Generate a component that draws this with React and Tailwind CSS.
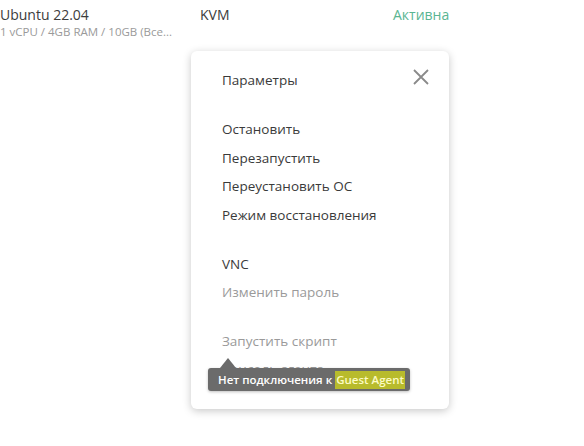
export default function App() {
  const font = { fontFamily: '"Open Sans", "Noto Sans", sans-serif' };
  return (
    <div className="relative w-[584px] h-[446px] bg-white overflow-hidden" style={font}>
      <div className="flex items-start pt-[5px]">
        <div className="w-[200px]">
          <div className="text-[14px] leading-[20px] text-[#3c3c3c]">Ubuntu 22.04</div>
          <div className="text-[11.5px] leading-[14px] text-[#9a9a9a] whitespace-nowrap">1 vCPU / 4GB RAM / 10GB (Все...</div>
        </div>
        <div className="w-[193px] text-[14px] leading-[20px] text-[#3c3c3c]">KVM</div>
        <div className="text-[14px] leading-[20px] text-[#5ab592]">Активна</div>
      </div>

      <div className="absolute left-[191px] top-[51px] w-[258px] h-[358px] bg-white rounded-[6px] shadow-[0_2px_8px_rgba(0,0,0,0.22)]">
        <div className="flex flex-col pt-[15px] pl-[31px] text-[13.5px] text-[#3a3a3a]">
          <div className="h-[28.5px] flex items-center">Параметры</div>
          <div className="h-[20.5px]" />
          <div className="h-[28.5px] flex items-center">Остановить</div>
          <div className="h-[28.5px] flex items-center">Перезапустить</div>
          <div className="h-[28.5px] flex items-center">Переустановить ОС</div>
          <div className="h-[28.5px] flex items-center">Режим восстановления</div>
          <div className="h-[20.5px]" />
          <div className="h-[28.5px] flex items-center">VNC</div>
          <div className="h-[28.5px] flex items-center text-[#9a9a9a]">Изменить пароль</div>
          <div className="h-[20.5px]" />
          <div className="h-[28.5px] flex items-center text-[#9a9a9a]">Запустить скрипт</div>
          <div className="h-[28.5px] flex items-center text-[#9a9a9a] -mt-[1px]">Консоль агента</div>
        </div>

        <button className="absolute left-[222px] top-[18px] w-[16px] h-[16px]">
          <svg width="16" height="16" viewBox="0 0 16 16">
            <path d="M1 1 L15 15 M15 1 L1 15" stroke="#8a8a8a" strokeWidth="1.8" />
          </svg>
        </button>

        <div className="absolute left-[17px] top-[317px] w-[202px] h-[23px] bg-[#6b6b6b] rounded-[3px] flex items-center pl-[10px] text-[11.5px] font-semibold text-white whitespace-nowrap shadow-[0_1px_3px_rgba(0,0,0,0.25)]">
          <span>Нет подключения к&nbsp;</span>
          <span className="bg-[#b8bb2c] text-[#fdfbc4] px-[1px] h-[18px] flex items-center">Guest Agent</span>
          <div className="absolute left-[12px] -top-[10px] w-0 h-0 border-l-[8px] border-r-[8px] border-b-[10px] border-l-transparent border-r-transparent border-b-[#6b6b6b]" />
        </div>
      </div>
    </div>
  );
}
